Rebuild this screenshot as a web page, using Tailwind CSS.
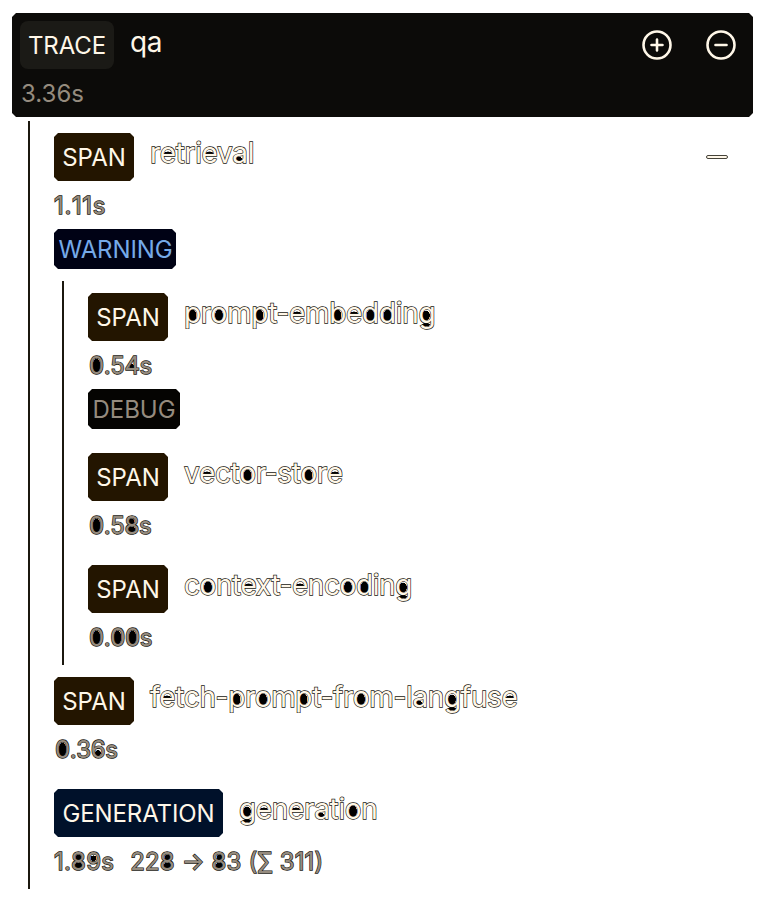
<!DOCTYPE html>
<html lang="en">
<head>
<meta charset="utf-8">
<title>Trace</title>
<script src="https://cdn.jsdelivr.net/npm/@tailwindcss/browser@4"></script>
</head>
<body class="bg-white w-[772px] h-[908px] overflow-hidden font-['Inter',sans-serif] text-[24px] leading-8 pl-3 pt-[13px]">
<header class="w-[741px] h-[104px] bg-[#0c0b09] pl-2 pt-2 pr-4 flex justify-between [clip-path:polygon(4px_0,calc(100%-4px)_0,100%_4px,100%_calc(100%-4px),calc(100%-4px)_100%,4px_100%,0_calc(100%-4px),0_4px)]">
  <div>
    <div class="flex">
      <span class="w-[94px] h-12 rounded-lg bg-[#1b1a16] text-[#fff7e8] flex items-center justify-center pt-0.5 tracking-[-0.1px]">TRACE</span>
      <span class="ml-4 mt-[5px] text-[28px] tracking-[-0.32px] text-[#fff7e8]">qa</span>
    </div>
    <div class="mt-[9px] pl-px text-[#958b7e]">3.36s</div>
  </div>
  <div class="flex gap-8 pt-2">
    <svg class="w-8 h-8" viewBox="0 0 32 32" fill="none" stroke="#fff7e8" stroke-width="2.6" stroke-linecap="round"><circle cx="16" cy="16" r="13.5"/><path d="M10.5 16h11M16 10.5v11"/></svg>
    <svg class="w-8 h-8" viewBox="0 0 32 32" fill="none" stroke="#fff7e8" stroke-width="2.6" stroke-linecap="round"><circle cx="16" cy="16" r="13.5"/><path d="M10.5 16h11"/></svg>
  </div>
</header>
<main class="ml-4 mt-1 h-[768px] w-[725px] border-l-2 border-[#1b180f] pl-6 pt-3">
  <section class="h-[148px]">
    <div class="flex">
      <span class="w-20 h-12 pt-0.5 bg-[#231500] text-[#fff7e8] flex items-center justify-center [clip-path:polygon(4px_0,calc(100%-4px)_0,100%_4px,100%_calc(100%-4px),calc(100%-4px)_100%,4px_100%,0_calc(100%-4px),0_4px)]">SPAN</span>
      <span data-outline class="ml-4 mt-1 text-[28px] tracking-[-0.35px] text-[#fff7e8]">retrieval</span>
      <svg class="ml-auto mr-[24px] mt-3 w-6 h-6" viewBox="0 0 24 24"><rect x="1.5" y="10.5" width="21" height="3" rx="1.5" fill="#fff7e8" stroke="#45433a"/></svg>
    </div>
    <div data-outline class="mt-[9px] h-8 tracking-[0.6px] [font-kerning:none] text-[#958b7e]">1.11s</div>
    <div class="mt-[7px] w-[122px] h-10 pt-0.5 pl-px tracking-[-0.1px] bg-[#000215] text-[#75a9e8] flex items-center justify-center [clip-path:polygon(4px_0,calc(100%-4px)_0,100%_4px,100%_calc(100%-4px),calc(100%-4px)_100%,4px_100%,0_calc(100%-4px),0_4px)]">WARNING</div>
  </section>
  <div class="ml-2 h-[384px] border-l-2 border-[#1b180f] pl-6 pt-3">
    <section class="h-40">
      <div class="flex">
        <span class="w-20 h-12 pt-0.5 bg-[#231500] text-[#fff7e8] flex items-center justify-center [clip-path:polygon(4px_0,calc(100%-4px)_0,100%_4px,100%_calc(100%-4px),calc(100%-4px)_100%,4px_100%,0_calc(100%-4px),0_4px)]">SPAN</span>
        <span data-outline class="ml-4 mt-1 text-[28px] tracking-[-0.32px] text-[#fff7e8]">prompt-embedding</span>
      </div>
      <div data-outline class="mt-[9px] h-8 pl-px tracking-[-0.4px] [font-kerning:none] text-[#958b7e]">0.54s</div>
      <div class="mt-[7px] w-[92px] h-10 pt-0.5 bg-[#050402] text-[#958b7e] flex items-center justify-center [clip-path:polygon(4px_0,calc(100%-4px)_0,100%_4px,100%_calc(100%-4px),calc(100%-4px)_100%,4px_100%,0_calc(100%-4px),0_4px)]">DEBUG</div>
    </section>
    <section class="h-28">
      <div class="flex">
        <span class="w-20 h-12 pt-0.5 bg-[#231500] text-[#fff7e8] flex items-center justify-center [clip-path:polygon(4px_0,calc(100%-4px)_0,100%_4px,100%_calc(100%-4px),calc(100%-4px)_100%,4px_100%,0_calc(100%-4px),0_4px)]">SPAN</span>
        <span data-outline class="ml-4 mt-1 text-[28px] tracking-[-0.32px] text-[#fff7e8]">vector-store</span>
      </div>
      <div data-outline class="mt-[9px] h-8 pl-px tracking-[-0.4px] [font-kerning:none] text-[#958b7e]">0.58s</div>
    </section>
    <section>
      <div class="flex">
        <span class="w-20 h-12 pt-0.5 bg-[#231500] text-[#fff7e8] flex items-center justify-center [clip-path:polygon(4px_0,calc(100%-4px)_0,100%_4px,100%_calc(100%-4px),calc(100%-4px)_100%,4px_100%,0_calc(100%-4px),0_4px)]">SPAN</span>
        <span data-outline class="ml-4 mt-1 text-[28px] tracking-[-0.42px] text-[#fff7e8]">context-encoding</span>
      </div>
      <div data-outline class="mt-[9px] h-8 pl-px tracking-[-0.4px] [font-kerning:none] text-[#958b7e]">0.00s</div>
    </section>
  </div>
  <section class="mt-3 h-28">
    <div class="flex">
      <span class="w-20 h-12 pt-0.5 bg-[#231500] text-[#fff7e8] flex items-center justify-center [clip-path:polygon(4px_0,calc(100%-4px)_0,100%_4px,100%_calc(100%-4px),calc(100%-4px)_100%,4px_100%,0_calc(100%-4px),0_4px)]">SPAN</span>
      <span data-outline class="ml-4 mt-1 text-[28px] tracking-[-0.34px] text-[#fff7e8]">fetch-prompt-from-langfuse</span>
    </div>
    <div data-outline class="mt-[9px] h-8 pl-px tracking-[-0.4px] [font-kerning:none] text-[#958b7e]">0.36s</div>
  </section>
  <section>
    <div class="flex">
      <span class="w-[169px] h-12 pt-0.5 bg-[#00112a] text-[#fff7e8] flex items-center justify-center tracking-[-0.1px] [clip-path:polygon(4px_0,calc(100%-4px)_0,100%_4px,100%_calc(100%-4px),calc(100%-4px)_100%,4px_100%,0_calc(100%-4px),0_4px)]">GENERATION</span>
      <span data-outline class="ml-4 mt-1 text-[28px] tracking-[-0.35px] text-[#fff7e8]">generation</span>
    </div>
    <div class="mt-[9px] flex gap-4 [font-kerning:none] text-[#958b7e]"><span data-outline class="tracking-[0.2px]">1.89s</span><span data-outline class="tracking-[0.15px]">228 → 83 (∑ 311)</span></div>
  </section>
</main>
<script>
// Dark fills for the enclosed counters of outlined letters.
const round = "bg-[radial-gradient(ellipse_4px_6px_at_50%_57%,#000_92%,transparent)]";
const counters = {
  o: round, p: round, b: round, d: round,
  e: "bg-[radial-gradient(ellipse_4px_2px_at_50%_51%,#000_80%,transparent)]",
  a: "bg-[radial-gradient(ellipse_3px_2px_at_45%_67%,#000_90%,transparent)]",
  g: "bg-[radial-gradient(ellipse_4px_5px_at_47%_57%,#000_90%,transparent),radial-gradient(ellipse_4px_1.5px_at_47%_84%,#000_90%,transparent)]",
  0: "bg-[radial-gradient(ellipse_4px_7px_at_50%_50%,#000_90%,transparent)]",
  4: "bg-[radial-gradient(ellipse_2px_3px_at_50%_54%,#000_90%,transparent)]",
  6: "bg-[radial-gradient(ellipse_3px_3px_at_50%_62%,#000_90%,transparent)]",
  8: "bg-[radial-gradient(ellipse_3px_3px_at_50%_36%,#000_90%,transparent),radial-gradient(ellipse_4px_3px_at_50%_64%,#000_90%,transparent)]",
  9: "bg-[radial-gradient(ellipse_3px_3px_at_50%_39%,#000_90%,transparent)]"
};
document.querySelectorAll("[data-outline]").forEach(el => {
  const text = el.textContent;
  el.textContent = "";
  el.className += " whitespace-nowrap [-webkit-text-stroke:1.3px_#17150f] [paint-order:stroke_fill]";
  for (const ch of text) {
    if (!counters[ch]) { el.append(ch); continue; }
    const s = document.createElement("span");
    s.className = counters[ch];
    s.textContent = ch;
    el.append(s);
  }
});
</script>
</body>
</html>
